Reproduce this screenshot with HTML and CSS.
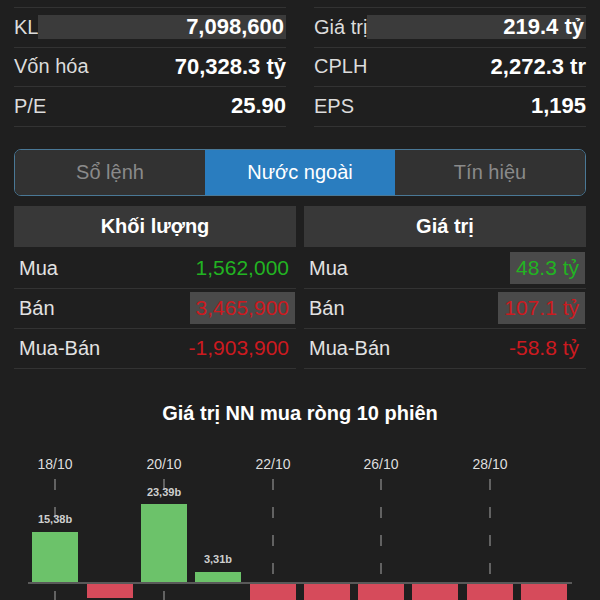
FILE: index.html
```html
<!DOCTYPE html>
<html lang="vi">
<head>
  <meta charset="UTF-8">
  <meta name="viewport" content="width=device-width, initial-scale=1.0">
  <title>Nước ngoài</title>
  <link rel="stylesheet" href="styles.css">
</head>
<body>

  <main class="page">
    <section class="stats">
      <div class="stat-col">
        <div class="stat-row"><span class="stat-label">KL</span><span class="stat-value flash">7,098,600</span></div>
        <div class="stat-row"><span class="stat-label">Vốn hóa</span><span class="stat-value">70,328.3 tỷ</span></div>
        <div class="stat-row"><span class="stat-label">P/E</span><span class="stat-value">25.90</span></div>
      </div>
      <div class="stat-col">
        <div class="stat-row"><span class="stat-label">Giá trị</span><span class="stat-value flash">219.4 tỷ</span></div>
        <div class="stat-row"><span class="stat-label">CPLH</span><span class="stat-value">2,272.3 tr</span></div>
        <div class="stat-row"><span class="stat-label">EPS</span><span class="stat-value">1,195</span></div>
      </div>
    </section>

    <nav class="tabs">
      <div class="tab">Sổ lệnh</div>
      <div class="tab active">Nước ngoài</div>
      <div class="tab">Tín hiệu</div>
    </nav>

    <section class="foreign">
      <div class="foreign-col">
        <div class="foreign-head">Khối lượng</div>
        <div class="foreign-row"><span>Mua</span><span class="num up">1,562,000</span></div>
        <div class="foreign-row"><span>Bán</span><span class="num down boxed">3,465,900</span></div>
        <div class="foreign-row"><span>Mua-Bán</span><span class="num down">-1,903,900</span></div>
      </div>
      <div class="foreign-col">
        <div class="foreign-head">Giá trị</div>
        <div class="foreign-row"><span>Mua</span><span class="num up boxed">48.3 tỷ</span></div>
        <div class="foreign-row"><span>Bán</span><span class="num down boxed">107.1 tỷ</span></div>
        <div class="foreign-row"><span>Mua-Bán</span><span class="num down">-58.8 tỷ</span></div>
      </div>
    </section>

    <h3 class="chart-title">Giá trị NN mua ròng 10 phiên</h3>
  </main>

  <svg class="chart" width="600" height="170" viewBox="0 0 600 170">
    <g class="dates">
      <text x="55" y="37">18/10</text>
      <text x="164" y="37">20/10</text>
      <text x="273" y="37">22/10</text>
      <text x="381" y="37">26/10</text>
      <text x="490" y="37">28/10</text>
    </g>
    <g class="grid">
      <line x1="55" y1="47" x2="55" y2="170"/>
      <line x1="164" y1="47" x2="164" y2="170"/>
      <line x1="273" y1="47" x2="273" y2="170"/>
      <line x1="381" y1="47" x2="381" y2="170"/>
      <line x1="490" y1="47" x2="490" y2="170"/>
    </g>
    <g class="bars-up">
      <rect x="32" y="100" width="46" height="50"/>
      <rect x="141" y="72" width="46" height="78"/>
      <rect x="195" y="140" width="46" height="10"/>
    </g>
    <g class="bars-down">
      <rect x="87" y="152" width="46" height="14"/>
      <rect x="250" y="152" width="46" height="30"/>
      <rect x="304" y="152" width="46" height="30"/>
      <rect x="358" y="152" width="46" height="30"/>
      <rect x="412" y="152" width="46" height="30"/>
      <rect x="467" y="152" width="46" height="30"/>
      <rect x="521" y="152" width="46" height="30"/>
    </g>
    <line class="zero" x1="28" y1="151" x2="572" y2="151"/>
    <g class="bar-labels">
      <text x="55" y="91">15,38b</text>
      <text x="164" y="64">23,39b</text>
      <text x="218" y="131">3,31b</text>
    </g>
  </svg>

</body>
</html>
```

FILE: styles.css
```css
html {
  overflow: hidden;
}

body {
  margin: 0;
  background-color: #1f1f1f;
  color: #fff;
  font-family: "Liberation Sans", Arial, sans-serif;
  font-size: 20px;
}

.page {
  padding: 7px 14px 0;
}

/* top stats */
.stats {
  display: grid;
  grid-template-columns: 1fr 1fr;
  column-gap: 28px;
}

.stat-col {
  border-top: 1px solid #333;
}

.stat-row {
  display: flex;
  align-items: center;
  height: 38.5px;
  border-bottom: 1px solid #333;
}

.stat-label {
  color: #dcdcdc;
}

.stat-value {
  margin-left: auto;
  font-size: 22px;
  font-weight: bold;
  color: #fff;
}

.stat-value.flash {
  flex: 1;
  text-align: right;
  height: 24px;
  line-height: 24px;
  padding-right: 2px;
  background-color: #3b3b3b;
}

/* segmented tabs */
.tabs {
  display: flex;
  margin-top: 22px;
  height: 45px;
  border: 1px solid #4a7896;
  border-radius: 7px;
  overflow: hidden;
}

.tab {
  flex: 1;
  display: flex;
  align-items: center;
  justify-content: center;
  background-color: #323232;
  color: #8a8a8a;
}

.tab.active {
  background-color: #2a7dbf;
  color: #fff;
}

/* foreign trading */
.foreign {
  display: grid;
  grid-template-columns: 1fr 1fr;
  column-gap: 8px;
  margin-top: 10px;
}

.foreign-head {
  height: 41px;
  line-height: 41px;
  text-align: center;
  font-weight: bold;
  background-color: #383838;
  margin-bottom: 2px;
}

.foreign-row {
  display: flex;
  align-items: center;
  justify-content: space-between;
  height: 39px;
  padding: 0 1px 0 5px;
  border-bottom: 1px solid #333;
  color: #e2e2e2;
}

.num {
  padding: 0 6px;
  height: 32px;
  line-height: 32px;
  font-size: 21px;
}

.num.up {
  color: #22b322;
}

.num.down {
  color: #cc1a1f;
}

.num.boxed {
  background-color: #4a4a4a;
}

.chart-title {
  margin: 33px 0 8px;
  font-size: 20px;
  line-height: 22px;
  text-align: center;
}

/* chart */
.chart {
  display: block;
}

.dates text {
  fill: #dedede;
  font-size: 14px;
  text-anchor: middle;
}

.grid line {
  stroke: #7a7a7a;
  stroke-width: 1.5;
  stroke-dasharray: 11 17;
}

.bars-up rect {
  fill: #6cc26a;
}

.bars-down rect {
  fill: #d64b5b;
}

.zero {
  stroke: #6e6e6e;
  stroke-width: 1.5;
}

.bar-labels text {
  fill: #cfcfcf;
  font-size: 11px;
  font-weight: bold;
  text-anchor: middle;
}
```
